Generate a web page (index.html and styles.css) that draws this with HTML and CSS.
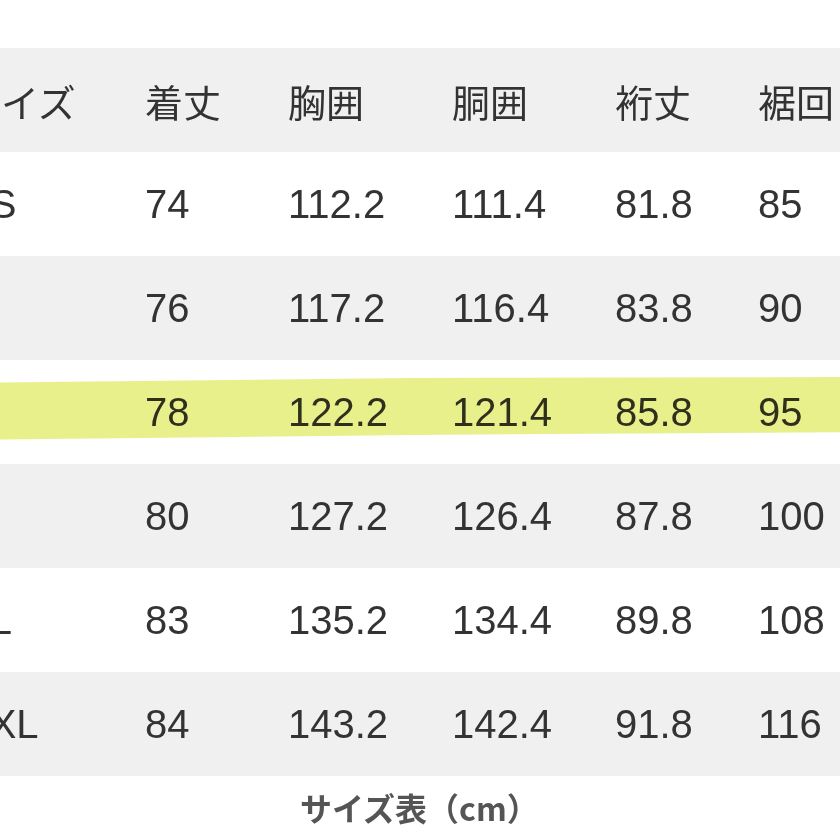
FILE: index.html
```html
<!DOCTYPE html>
<html lang="ja">
<head>
<meta charset="utf-8">
<link rel="stylesheet" href="styles.css">
</head>
<body>
<div class="page">
  <div class="table">
    <div class="row head">
      <div class="cell">サイズ</div><div class="cell">着丈</div><div class="cell">胸囲</div><div class="cell">胴囲</div><div class="cell">裄丈</div><div class="cell">裾回り</div>
    </div>
    <div class="row">
      <div class="cell">XS</div><div class="cell">74</div><div class="cell">112.2</div><div class="cell">111.4</div><div class="cell">81.8</div><div class="cell">85</div>
    </div>
    <div class="row alt">
      <div class="cell">S</div><div class="cell">76</div><div class="cell">117.2</div><div class="cell">116.4</div><div class="cell">83.8</div><div class="cell">90</div>
    </div>
    <div class="row marked">
      <div class="cell">M</div><div class="cell">78</div><div class="cell">122.2</div><div class="cell">121.4</div><div class="cell">85.8</div><div class="cell">95</div>
      <div class="marker"></div>
    </div>
    <div class="row alt">
      <div class="cell">L</div><div class="cell">80</div><div class="cell">127.2</div><div class="cell">126.4</div><div class="cell">87.8</div><div class="cell">100</div>
    </div>
    <div class="row">
      <div class="cell">XL</div><div class="cell">83</div><div class="cell">135.2</div><div class="cell">134.4</div><div class="cell">89.8</div><div class="cell">108</div>
    </div>
    <div class="row alt">
      <div class="cell">XXL</div><div class="cell">84</div><div class="cell">143.2</div><div class="cell">142.4</div><div class="cell">91.8</div><div class="cell">116</div>
    </div>
  </div>
  <div class="caption">サイズ表（cm）</div>
</div>
</body>
</html>
```
FILE: styles.css
```css
html, body {
  margin: 0;
  padding: 0;
  background: #ffffff;
  overflow: hidden;
}
.page {
  width: 840px;
  height: 840px;
  padding-top: 48px;
  box-sizing: border-box;
  overflow: hidden;
  font-family: "Liberation Sans", Arial, "Noto Sans CJK JP", sans-serif;
  color: #333333;
}
.table {
  margin-left: -37px;
  width: 900px;
}
.row {
  position: relative;
  display: grid;
  grid-template-columns: 182px 143px 164px 163px 143px 105px;
  align-items: center;
  height: 104px;
  font-size: 40px;
}
.head, .alt {
  background: #f0f0f0;
}
.head .cell {
  font-family: "Noto Sans CJK JP", sans-serif;
  font-size: 38px;
  font-weight: 400;
  white-space: nowrap;
}
.cell {
  white-space: nowrap;
  position: relative;
  z-index: 1;
}
.marker {
  position: absolute;
  left: 0;
  right: 0;
  top: 17px;
  height: 63px;
  background: #e8f08c;
  clip-path: polygon(0 6px, 50% 1px, 100% 0, 100% 55px, 50% 58px, 0 100%);
  z-index: 2;
  mix-blend-mode: multiply;
}
.caption {
  margin-top: 8px;
  margin-left: 300px;
  font-family: "Noto Sans CJK JP", sans-serif;
  font-weight: 700;
  font-size: 32px;
  color: #555555;
}
```
